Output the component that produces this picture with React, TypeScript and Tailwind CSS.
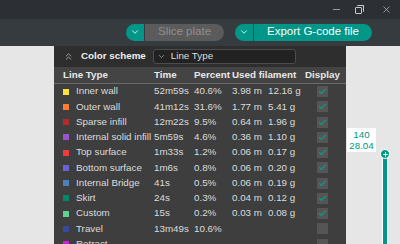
import { ChevronDown, ChevronsUp, Check, Minus, X, Plus } from "lucide-react";

const ROWS = [
  { name: "Inner wall", color: "#f7e13e", time: "52m59s", pct: "40.6%", m: "3.98 m", g: "12.16 g", on: true },
  { name: "Outer wall", color: "#fd7d34", time: "41m12s", pct: "31.6%", m: "1.77 m", g: "5.41 g", on: true },
  { name: "Sparse infill", color: "#b32c2a", time: "12m22s", pct: "9.5%", m: "0.64 m", g: "1.96 g", on: true },
  { name: "Internal solid infill", color: "#9b52cf", time: "5m59s", pct: "4.6%", m: "0.36 m", g: "1.10 g", on: true },
  { name: "Top surface", color: "#f03c3c", time: "1m33s", pct: "1.2%", m: "0.06 m", g: "0.17 g", on: true },
  { name: "Bottom surface", color: "#6b61d6", time: "1m6s", pct: "0.8%", m: "0.06 m", g: "0.20 g", on: true },
  { name: "Internal Bridge", color: "#4d80ba", time: "41s", pct: "0.5%", m: "0.06 m", g: "0.19 g", on: true },
  { name: "Skirt", color: "#00876e", time: "24s", pct: "0.3%", m: "0.04 m", g: "0.12 g", on: true },
  { name: "Custom", color: "#5ed194", time: "15s", pct: "0.2%", m: "0.03 m", g: "0.08 g", on: true },
  { name: "Travel", color: "#38489f", time: "13m49s", pct: "10.6%", m: "", g: "", on: false },
  { name: "Retract", color: "#d21fd2", time: "", pct: "", m: "", g: "", on: false },
];

const cols = "grid grid-cols-[91px_40px_38px_36px_37px_1fr] items-center";

export default function App() {
  return (
    <div
      className="w-[400px] h-[244px] overflow-hidden flex flex-col bg-[#e6e6e6] text-[9.8px]"
      style={{ fontFamily: "'Liberation Sans', Arial, sans-serif" }}
    >
      {/* Title bar */}
      <div className="h-[19px] shrink-0 bg-[#2c3034] flex items-center justify-end pr-[8px] text-[#c8c8c8]">
        <Minus className="w-[11px] h-[11px] mr-[13px]" strokeWidth={1.5} />
        <div className="relative w-[9px] h-[9px] mr-[17px]">
          <div className="absolute left-0 bottom-0 w-[7px] h-[7px] border border-[#c8c8c8] rounded-[1px]" />
          <div className="absolute right-0 top-0 w-[7px] h-[7px] border-t border-r border-[#c8c8c8] rounded-[1px]" />
        </div>
        <X className="w-[11px] h-[11px]" strokeWidth={1.5} />
      </div>

      {/* Toolbar */}
      <div className="h-[27px] shrink-0 bg-[#363b3f] flex items-center pl-[126px] pb-[1px]">
        <div className="flex h-[17px] w-[98px] rounded-full overflow-hidden">
          <div className="w-[18px] bg-[#009688] flex items-center justify-center">
            <ChevronDown className="w-[10px] h-[10px] text-white" strokeWidth={2} />
          </div>
          <div className="ml-[1px] flex-1 bg-[#5b5b5b] text-[#8f8f8f] text-[11.5px] flex items-center justify-center">
            Slice plate
          </div>
        </div>
        <div className="ml-[11px] flex h-[17px] w-[137px] rounded-full overflow-hidden">
          <div className="w-[18px] bg-[#009688] flex items-center justify-center">
            <ChevronDown className="w-[10px] h-[10px] text-white" strokeWidth={2} />
          </div>
          <div className="ml-[1px] flex-1 bg-[#009688] text-white text-[11.5px] flex items-center justify-center">
            Export G-code file
          </div>
        </div>
      </div>

      <div className="flex flex-1 min-h-0">
        <div className="w-[54px] shrink-0" />

        {/* Legend panel */}
        <div className="w-[292px] shrink-0 bg-[#3e3e3e] flex flex-col">
          <div className="h-[21px] shrink-0 bg-[#2e2e2e] flex items-center pl-[9px]">
            <ChevronsUp className="w-[11px] h-[11px] text-[#cfcfcf]" strokeWidth={1.5} />
            <span className="ml-[7px] font-bold text-[#eeeeee]">Color scheme</span>
            <div className="ml-[7px] w-[143px] h-[15px] rounded-[3px] bg-[#222222] border border-[#4c4c4c] flex items-center pl-[3px] text-[#dddddd]">
              <ChevronDown className="w-[9px] h-[9px] text-[#cfcfcf]" strokeWidth={1.5} />
              <span className="ml-[5px]">Line Type</span>
            </div>
          </div>

          <div className={`${cols} h-[17px] shrink-0 bg-[#444444] border-b border-[#6a6a6a] pl-[9px] font-bold text-[#e8e8e8]`}>
            <span>Line Type</span>
            <span>Time</span>
            <span>Percent</span>
            <span className="col-span-2">Used filament</span>
            <span>Display</span>
          </div>

          {ROWS.map((r) => (
            <div key={r.name} className={`${cols} h-[15.25px] shrink-0 pl-[9px] text-[#dcdcdc] whitespace-nowrap`}>
              <div className="flex items-center">
                <span className="w-[6px] h-[6px] shrink-0" style={{ background: r.color }} />
                <span className="ml-[7px]">{r.name}</span>
              </div>
              <span>{r.time}</span>
              <span>{r.pct}</span>
              <span>{r.m}</span>
              <span>{r.g}</span>
              <div className="pl-[12px]">
                <div className="w-[11px] h-[11px] bg-[#555555] flex items-center justify-center">
                  {r.on && <Check className="w-[9px] h-[9px] text-[#00a08c]" strokeWidth={3} />}
                </div>
              </div>
            </div>
          ))}
        </div>

        {/* Right side / layer slider */}
        <div className="relative flex-1">
          <div className="absolute left-[1px] top-[82px] w-[29px] h-[24px] bg-white flex flex-col items-center justify-center leading-[11px] text-[#009688]">
            <span>140</span>
            <span>28.04</span>
          </div>
          <div className="absolute left-[36px] top-[112px] w-[6px] h-[100px] bg-[#009688] border-x border-white" />
          <div className="absolute left-[34px] top-[103px] w-[10px] h-[10px] rounded-full bg-[#009688] border border-white flex items-center justify-center">
            <Plus className="w-[7px] h-[7px] text-white" strokeWidth={3} />
          </div>
        </div>
      </div>
    </div>
  );
}
